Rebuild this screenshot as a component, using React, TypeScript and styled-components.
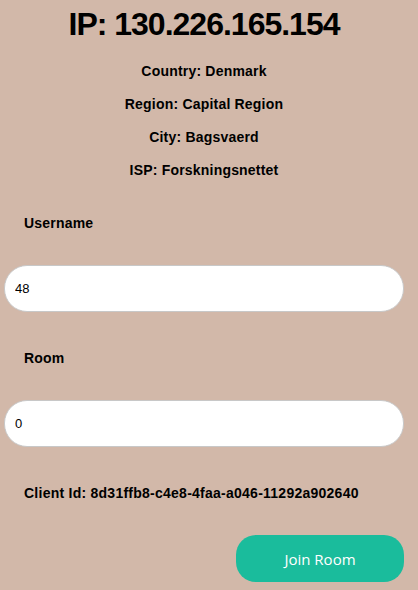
import React from "react";
import styled, { createGlobalStyle } from "styled-components";

const Global = createGlobalStyle`
  html, body { margin: 0; padding: 0; background: #d2b8a9; }
  body { font-family: "Liberation Sans", Arial, sans-serif; color: #000; }
`;

const Page = styled.div`
  width: 418px;
  min-height: 590px;
  display: flex;
  flex-direction: column;
`;

const Header = styled.header`
  width: 408px;
  display: flex;
  flex-direction: column;
  align-items: center;
`;

const Title = styled.h1`
  margin: 6px 0 0;
  font-size: 32px;
  line-height: 37px;
  font-weight: 700;
  letter-spacing: -1px;
`;

const InfoList = styled.div`
  display: flex;
  flex-direction: column;
  align-items: center;
  gap: 17px;
  margin-top: 20px;
`;

const Info = styled.p`
  margin: 0;
  font-size: 14px;
  line-height: 16px;
  font-weight: 700;
  letter-spacing: 0.2px;
`;

const Form = styled.form`
  display: flex;
  flex-direction: column;
  padding: 0 14px 0 4px;
`;

const Label = styled.label<{ $top: number }>`
  margin: ${(p) => p.$top}px 0 0 20px;
  font-size: 14px;
  line-height: 16px;
  font-weight: 700;
  letter-spacing: 0.2px;
`;

const Input = styled.input`
  box-sizing: border-box;
  margin-top: 34px;
  width: 400px;
  height: 47px;
  border: 1px solid #c8c8c8;
  border-radius: 23px;
  background: #fff;
  padding: 0 10px;
  font-family: "Liberation Sans", Arial, sans-serif;
  font-size: 13px;
  color: #000;
  outline: none;
`;

const ClientId = styled.p`
  margin: 38px 0 0 20px;
  font-size: 14px;
  line-height: 16px;
  font-weight: 700;
  letter-spacing: 0.25px;
`;

const Actions = styled.div`
  display: flex;
  justify-content: flex-end;
  margin-top: 34px;
`;

const JoinButton = styled.button`
  width: 168px;
  height: 47px;
  border: none;
  border-radius: 20px;
  background: #1abc9c;
  color: #fff;
  font-family: "Open Sans", sans-serif;
  font-size: 15px;
  cursor: pointer;
`;

export default function App() {
  return (
    <>
      <Global />
      <Page>
        <Header>
          <Title>IP: 130.226.165.154</Title>
          <InfoList>
            <Info>Country: Denmark</Info>
            <Info>Region: Capital Region</Info>
            <Info>City: Bagsvaerd</Info>
            <Info>ISP: Forskningsnettet</Info>
          </InfoList>
        </Header>
        <Form onSubmit={(e) => e.preventDefault()}>
          <Label $top={37}>Username</Label>
          <Input defaultValue="48" />
          <Label $top={38}>Room</Label>
          <Input defaultValue="0" />
          <ClientId>Client Id: 8d31ffb8-c4e8-4faa-a046-11292a902640</ClientId>
          <Actions>
            <JoinButton type="submit">Join Room</JoinButton>
          </Actions>
        </Form>
      </Page>
    </>
  );
}
